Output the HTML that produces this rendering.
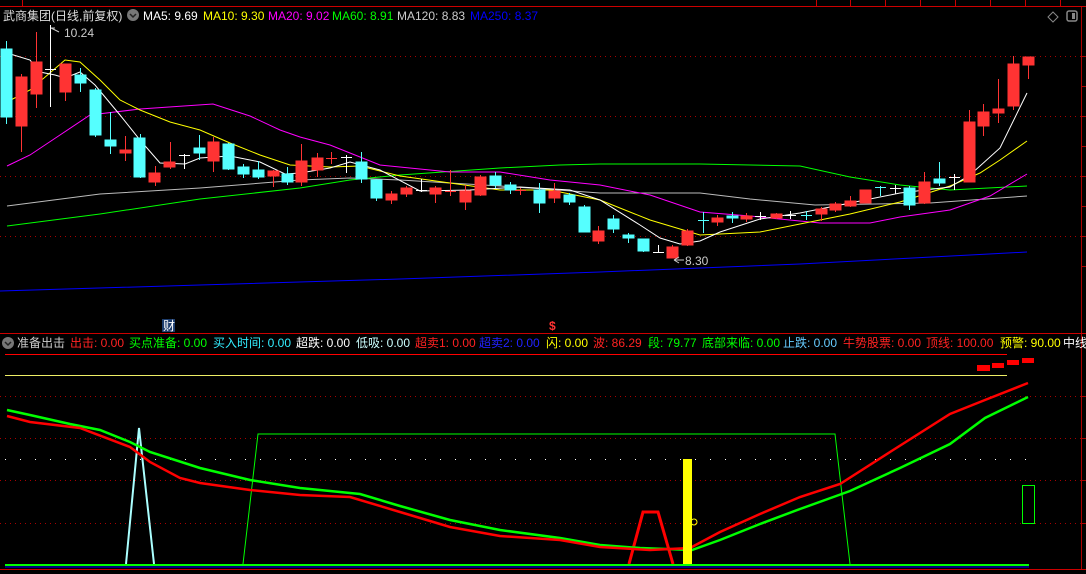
<!DOCTYPE html>
<html><head><meta charset="utf-8"><style>
html,body{margin:0;padding:0;background:#000;}
svg{display:block;}
text{font-family:"Liberation Sans","Noto Sans CJK SC",sans-serif;font-size:12px;}
</style></head><body>
<svg width="1086" height="574" viewBox="0 0 1086 574" xmlns="http://www.w3.org/2000/svg">
<rect width="1086" height="574" fill="#000"/>
<!-- top bar -->
<line x1="0" y1="6.5" x2="1086" y2="6.5" stroke="#c00" stroke-width="1"/>
<g stroke="#c00"><line x1="816.5" y1="0" x2="816.5" y2="6"/><line x1="850.5" y1="0" x2="850.5" y2="6"/><line x1="885.5" y1="0" x2="885.5" y2="6"/><line x1="920.5" y1="0" x2="920.5" y2="6"/><line x1="955.5" y1="0" x2="955.5" y2="6"/><line x1="990.5" y1="0" x2="990.5" y2="6"/><line x1="1025.5" y1="0" x2="1025.5" y2="6"/><line x1="1060.5" y1="0" x2="1060.5" y2="6"/><line x1="22.5" y1="0" x2="22.5" y2="6"/></g>
<!-- right axis -->
<line x1="1081.5" y1="7" x2="1081.5" y2="570" stroke="#a00"/>
<g stroke="#a00"><line x1="1081" y1="56.5" x2="1086" y2="56.5"/><line x1="1081" y1="86.5" x2="1086" y2="86.5"/><line x1="1081" y1="116.5" x2="1086" y2="116.5"/><line x1="1081" y1="146.5" x2="1086" y2="146.5"/><line x1="1081" y1="176.5" x2="1086" y2="176.5"/><line x1="1081" y1="206.5" x2="1086" y2="206.5"/><line x1="1081" y1="236.5" x2="1086" y2="236.5"/><line x1="1081" y1="266.5" x2="1086" y2="266.5"/><line x1="1081" y1="396.5" x2="1086" y2="396.5"/><line x1="1081" y1="438.5" x2="1086" y2="438.5"/><line x1="1081" y1="480.5" x2="1086" y2="480.5"/><line x1="1081" y1="523.5" x2="1086" y2="523.5"/></g>
<!-- header -->
<text x="3" y="20" fill="#ddd">武商集团(日线,前复权)</text>
<circle cx="133" cy="15" r="6" fill="#777"/><path d="M130 14 l3 3 l3 -3" stroke="#222" stroke-width="1.5" fill="none"/>
<text x="143" y="20" fill="#fff">MA5: 9.69</text>
<text x="203" y="20" fill="#ff0">MA10: 9.30</text>
<text x="268" y="20" fill="#f0f">MA20: 9.02</text>
<text x="332" y="20" fill="#0f0">MA60: 8.91</text>
<text x="397" y="20" fill="#ccc">MA120: 8.83</text>
<text x="470" y="20" fill="#00f">MA250: 8.37</text>
<path d="M1053 12 l5 5 l-5 5 l-5 -5 z" stroke="#888" fill="none"/>
<rect x="1067" y="11" width="10" height="10" rx="2" stroke="#888" fill="none" stroke-width="1.5"/><rect x="1072" y="13" width="3" height="6" fill="#888"/>
<!-- grid -->
<g stroke="#a00" stroke-dasharray="1,4">
<line x1="0" y1="56.5" x2="1081" y2="56.5"/><line x1="0" y1="116.5" x2="1081" y2="116.5"/><line x1="0" y1="176.5" x2="1081" y2="176.5"/><line x1="0" y1="236.5" x2="1081" y2="236.5"/>
<line x1="0" y1="396.5" x2="1081" y2="396.5"/><line x1="0" y1="438.5" x2="1081" y2="438.5"/><line x1="0" y1="480.5" x2="1081" y2="480.5"/><line x1="0" y1="523.5" x2="1081" y2="523.5"/>
</g>
<line x1="5" y1="459.5" x2="1030" y2="459.5" stroke="#fff" stroke-dasharray="1,14"/>
<!-- MAs -->
<g fill="none" stroke-width="1">
<polyline stroke="#0000ff" points="0,291 200,285 400,279 600,272 800,264 1027,252"/>
<polyline stroke="#bbb" points="7,206 100,194 200,188 300,180 350,178 400,180 500,186 600,193 700,193 750,199 815,205 930,203 1027,196"/>
<polyline stroke="#0f0" points="7,226 100,214 200,199 300,188 350,180 400,175 500,168 560,165 600,164 700,164 800,166 850,177 900,185 950,190 1027,186"/>
<polyline stroke="#f0f" points="7,166 30,155 60,135 90,115 140,109 213,104 250,116 280,130 300,137 330,145 350,153 380,165 450,172 500,172 550,180 600,185 650,195 700,212 750,216 820,223 870,223 900,217 950,210 990,196 1027,174"/>
<polyline stroke="#ff0" points="7,102 30,90 65,60 80,62 100,80 120,100 140,110 170,122 200,130 230,143 260,155 290,165 330,167 360,166 400,176 500,190 550,190 600,200 650,220 700,235 760,232 800,224 850,214 900,202 950,186 980,173 1000,160 1027,141"/>
<polyline stroke="#fff" points="7,53 30,60 40,72 55,75 65,78 80,72 95,85 120,115 140,140 160,163 185,164 200,158 230,156 260,162 285,174 300,173 330,168 350,162 380,170 420,191 470,190 520,187 570,190 600,200 640,225 660,238 680,244 700,241 720,232 760,219 800,213 850,203 900,193 950,187 970,175 1000,148 1027,93"/>
</g>
<!-- candles -->
<g stroke-width="1">
<g stroke="#5ff" fill="#5ff">
<line x1="6.5" y1="41" x2="6.5" y2="124"/><rect x="1" y="49" width="11" height="68"/>
<line x1="80.5" y1="68" x2="80.5" y2="92"/><rect x="75" y="75" width="11" height="8"/>
<line x1="95.5" y1="88" x2="95.5" y2="137"/><rect x="90" y="90" width="11" height="45"/>
<line x1="110.5" y1="112" x2="110.5" y2="154"/><rect x="105" y="140" width="11" height="6"/>
<line x1="140.5" y1="134" x2="140.5" y2="178"/><rect x="134" y="138" width="11" height="39"/>
<line x1="199.5" y1="135" x2="199.5" y2="160"/><rect x="194" y="148" width="11" height="5"/>
<line x1="228.5" y1="143" x2="228.5" y2="170"/><rect x="223" y="144" width="11" height="25"/>
<line x1="243.5" y1="164" x2="243.5" y2="178"/><rect x="238" y="167" width="11" height="7"/>
<line x1="258.5" y1="161" x2="258.5" y2="179"/><rect x="253" y="170" width="11" height="7"/>
<line x1="287.5" y1="167" x2="287.5" y2="185"/><rect x="282" y="174" width="11" height="8"/>
<line x1="361.5" y1="152" x2="361.5" y2="183"/><rect x="356" y="162" width="11" height="17"/>
<line x1="376.5" y1="179" x2="376.5" y2="201"/><rect x="371" y="180" width="11" height="18"/>
<line x1="495.5" y1="172" x2="495.5" y2="188"/><rect x="490" y="176" width="11" height="9"/>
<line x1="510.5" y1="182" x2="510.5" y2="194"/><rect x="505" y="185" width="11" height="5"/>
<line x1="539.5" y1="183" x2="539.5" y2="213"/><rect x="534" y="190" width="11" height="13"/>
<line x1="569.5" y1="193" x2="569.5" y2="205"/><rect x="564" y="195" width="11" height="7"/>
<line x1="584.5" y1="205" x2="584.5" y2="232"/><rect x="579" y="207" width="11" height="25"/>
<line x1="613.5" y1="215" x2="613.5" y2="233"/><rect x="608" y="219" width="11" height="10"/>
<line x1="628.5" y1="233" x2="628.5" y2="243"/><rect x="623" y="235" width="11" height="3"/>
<line x1="643.5" y1="239" x2="643.5" y2="252"/><rect x="638" y="239" width="11" height="12"/>
<line x1="703.5" y1="212" x2="703.5" y2="233"/><line x1="698" y1="220.5" x2="709" y2="220.5"/>
<line x1="732.5" y1="212" x2="732.5" y2="223"/><rect x="727" y="216" width="11" height="2"/>
<line x1="806.5" y1="211" x2="806.5" y2="220"/><line x1="801" y1="215.5" x2="812" y2="215.5"/>
<line x1="880.5" y1="186" x2="880.5" y2="196"/><line x1="875" y1="187.5" x2="886" y2="187.5"/>
<line x1="909.5" y1="186" x2="909.5" y2="210"/><rect x="904" y="188" width="11" height="17"/>
<line x1="939.5" y1="162" x2="939.5" y2="186"/><rect x="934" y="179" width="11" height="4"/>
</g>
<g stroke="#f33" fill="#f33">
<line x1="21.5" y1="74" x2="21.5" y2="152"/><rect x="16" y="77" width="11" height="49"/>
<line x1="36.5" y1="32" x2="36.5" y2="108"/><rect x="31" y="62" width="11" height="32"/>
<line x1="65.5" y1="64" x2="65.5" y2="101"/><rect x="60" y="64" width="11" height="28"/>
<line x1="125.5" y1="136" x2="125.5" y2="161"/><rect x="120" y="150" width="11" height="3"/>
<line x1="155.5" y1="166" x2="155.5" y2="186"/><rect x="149" y="173" width="11" height="9"/>
<line x1="170.5" y1="142" x2="170.5" y2="169"/><rect x="164" y="162" width="11" height="5"/>
<line x1="213.5" y1="137" x2="213.5" y2="172"/><rect x="208" y="142" width="11" height="19"/>
<line x1="273.5" y1="170" x2="273.5" y2="187"/><rect x="268" y="171" width="11" height="5"/>
<line x1="301.5" y1="144" x2="301.5" y2="186"/><rect x="296" y="161" width="11" height="21"/>
<line x1="317.5" y1="153" x2="317.5" y2="177"/><rect x="312" y="158" width="11" height="12"/>
<line x1="331.5" y1="152" x2="331.5" y2="164"/><line x1="326" y1="158.5" x2="337" y2="158.5"/>
<line x1="391.5" y1="191" x2="391.5" y2="204"/><rect x="386" y="194" width="11" height="6"/>
<line x1="406.5" y1="186" x2="406.5" y2="197"/><rect x="401" y="188" width="11" height="6"/>
<line x1="435.5" y1="186" x2="435.5" y2="203"/><rect x="430" y="188" width="11" height="6"/>
<line x1="450.5" y1="170" x2="450.5" y2="196"/><line x1="445" y1="191.5" x2="456" y2="191.5"/>
<line x1="465.5" y1="185" x2="465.5" y2="210"/><rect x="460" y="191" width="11" height="11"/>
<line x1="480.5" y1="175" x2="480.5" y2="196"/><rect x="475" y="177" width="11" height="18"/>
<line x1="520.5" y1="188" x2="520.5" y2="195"/><line x1="515" y1="190.5" x2="526" y2="190.5"/>
<line x1="554.5" y1="183" x2="554.5" y2="203"/><rect x="549" y="191" width="11" height="7"/>
<line x1="598.5" y1="226" x2="598.5" y2="244"/><rect x="593" y="231" width="11" height="10"/>
<line x1="672.5" y1="245" x2="672.5" y2="258"/><rect x="667" y="247" width="11" height="11"/>
<line x1="687.5" y1="229" x2="687.5" y2="246"/><rect x="682" y="231" width="11" height="14"/>
<line x1="717.5" y1="215" x2="717.5" y2="226"/><rect x="712" y="218" width="11" height="4"/>
<line x1="746.5" y1="213" x2="746.5" y2="222"/><rect x="741" y="216" width="11" height="3"/>
<line x1="776.5" y1="213" x2="776.5" y2="219"/><rect x="771" y="214" width="11" height="4"/>
<line x1="821.5" y1="207" x2="821.5" y2="221"/><rect x="816" y="209" width="11" height="5"/>
<line x1="835.5" y1="202" x2="835.5" y2="212"/><rect x="830" y="204" width="11" height="6"/>
<line x1="850.5" y1="196" x2="850.5" y2="207"/><rect x="845" y="201" width="11" height="5"/>
<line x1="865.5" y1="190" x2="865.5" y2="203"/><rect x="860" y="190" width="11" height="13"/>
<line x1="924.5" y1="172" x2="924.5" y2="204"/><rect x="919" y="182" width="11" height="21"/>
<line x1="969.5" y1="110" x2="969.5" y2="182"/><rect x="964" y="122" width="11" height="60"/>
<line x1="983.5" y1="104" x2="983.5" y2="136"/><rect x="978" y="112" width="11" height="14"/>
<line x1="998.5" y1="79" x2="998.5" y2="123"/><rect x="993" y="109" width="11" height="4"/>
<line x1="1013.5" y1="56" x2="1013.5" y2="110"/><rect x="1008" y="64" width="11" height="42"/>
<line x1="1028.5" y1="57" x2="1028.5" y2="79"/><rect x="1023" y="57" width="11" height="8"/>
</g>
<g stroke="#fff">
<line x1="50.5" y1="25" x2="50.5" y2="107"/><line x1="45" y1="69.5" x2="56" y2="69.5"/>
<line x1="184.5" y1="154" x2="184.5" y2="169"/><line x1="179" y1="155.5" x2="190" y2="155.5"/>
<line x1="346.5" y1="155" x2="346.5" y2="173"/><line x1="341" y1="157.5" x2="352" y2="157.5"/>
<line x1="421.5" y1="179" x2="421.5" y2="192"/><line x1="416" y1="190.5" x2="427" y2="190.5"/>
<line x1="658.5" y1="245" x2="658.5" y2="253"/><line x1="653" y1="252.5" x2="664" y2="252.5"/>
<line x1="760.5" y1="212" x2="760.5" y2="220"/><line x1="755" y1="216.5" x2="766" y2="216.5"/>
<line x1="790.5" y1="211" x2="790.5" y2="219"/><line x1="785" y1="215.5" x2="796" y2="215.5"/>
<line x1="895.5" y1="185" x2="895.5" y2="194"/><line x1="890" y1="188.5" x2="901" y2="188.5"/>
<line x1="954.5" y1="174" x2="954.5" y2="190"/><line x1="949" y1="177.5" x2="960" y2="177.5"/>
</g>
</g>
<path d="M51 28 h4 M51 28 l8 4" stroke="#ccc" fill="none"/>
<text x="64" y="37" fill="#ccc">10.24</text>
<path d="M674 260 l5 -3 M674 260 l5 3 M674 260 h10" stroke="#ccc" fill="none"/>
<text x="685" y="265" fill="#ccc">8.30</text>
<!-- markers -->
<rect x="162" y="319" width="13" height="13" fill="#1d3d6d"/>
<text x="163" y="330" fill="#fff" font-size="11">财</text>
<text x="549" y="330" fill="#f33" font-size="11" font-weight="bold">$</text>
<!-- separator -->
<line x1="0" y1="333.5" x2="1086" y2="333.5" stroke="#c00"/>
<circle cx="8" cy="343" r="6" fill="#777"/><path d="M5 342 l3 3 l3 -3" stroke="#222" stroke-width="1.5" fill="none"/>
<text x="17" y="347" fill="#ccc">准备出击</text>
<text x="70" y="347" fill="#f22">出击: 0.00</text>
<text x="129" y="347" fill="#0f0">买点准备: 0.00</text>
<text x="213" y="347" fill="#3ef">买入时间: 0.00</text>
<text x="296" y="347" fill="#fff">超跌: 0.00</text>
<text x="356" y="347" fill="#cff">低吸: 0.00</text>
<text x="415" y="347" fill="#f22">超卖1: 0.00</text>
<text x="479" y="347" fill="#22f">超卖2: 0.00</text>
<text x="546" y="347" fill="#ff0">闪: 0.00</text>
<text x="593" y="347" fill="#f22">波: 86.29</text>
<text x="648" y="347" fill="#0f0">段: 79.77</text>
<text x="702" y="347" fill="#0f0">底部来临: 0.00</text>
<text x="783" y="347" fill="#6cf">止跌: 0.00</text>
<text x="843" y="347" fill="#f22">牛势股票: 0.00</text>
<text x="926" y="347" fill="#f22">顶线: 100.00</text>
<text x="1000" y="347" fill="#ff0">预警: 90.00</text>
<text x="1063" y="347" fill="#fff">中线</text>
<!-- lower panel -->
<line x1="5" y1="354.5" x2="1007" y2="354.5" stroke="#f00" stroke-width="1"/>
<line x1="5" y1="375.5" x2="1007" y2="375.5" stroke="#ee6" stroke-width="1"/>
<g fill="#f00"><rect x="977" y="365" width="13" height="6"/><rect x="992" y="363" width="12" height="5"/><rect x="1007" y="360" width="12" height="5"/><rect x="1022" y="358" width="12" height="5"/></g>
<polyline fill="none" stroke="#0f0" points="243,564 258,434 835,434 850,564"/>
<polyline fill="none" stroke="#aff" stroke-width="2" points="126,564 139,428 154,564"/>
<polyline fill="none" stroke="#f00" stroke-width="3" points="629,564 643,512 658,512 673,564"/>
<polyline fill="none" stroke="#0f0" stroke-width="2.5" points="7,410 30,415 70,424 100,430 130,442 150,452 200,468 250,480 300,488 330,491 360,494 400,506 450,520 500,530 560,538 600,545 640,548 692,550 720,540 760,524 800,509 850,491 900,468 950,444 985,418 1028,397"/>
<polyline fill="none" stroke="#f00" stroke-width="2.5" points="7,416 30,422 80,428 130,447 150,462 180,478 200,483 250,490 300,495 350,497 400,512 450,527 500,536 560,540 600,547 650,550 690,548 720,532 760,514 800,497 840,484 890,452 950,414 985,400 1028,383"/>
<rect x="683" y="459" width="9" height="105" fill="#ff0"/>
<circle cx="694" cy="522" r="3" fill="none" stroke="#ff0"/>
<rect x="1022.5" y="485.5" width="12" height="38" fill="none" stroke="#0f0"/>
<line x1="5" y1="565" x2="1029" y2="565" stroke="#0f0" stroke-width="2"/>
<line x1="5" y1="567" x2="1029" y2="567" stroke="#00f" stroke-width="1"/>
<line x1="0" y1="569.5" x2="1086" y2="569.5" stroke="#c00"/>
</svg>
</body></html>
